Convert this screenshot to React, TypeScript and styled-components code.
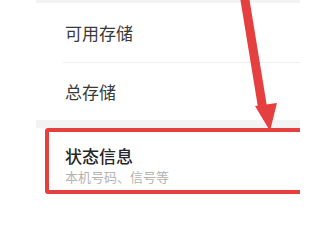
import React from "react";
import styled, { createGlobalStyle } from "styled-components";

const Global = createGlobalStyle`
  html, body { margin: 0; padding: 0; background: #ffffff; }
  body { font-family: "Noto Sans CJK SC", "Noto Sans", sans-serif; }
`;

const Screen = styled.div`
  position: relative;
  width: 300px;
  height: 200px;
  overflow: hidden;
  background: #ffffff;
`;

const Column = styled.div`
  margin-left: 36px;
  display: flex;
  flex-direction: column;
`;

const Gap = styled.div<{ $h: number }>`
  height: ${(p) => p.$h}px;
  background: #f3f3f3;
`;

const Card = styled.div`
  background: #ffffff;
  display: flex;
  flex-direction: column;
`;

const Row = styled.div<{ $h: number; $divider?: boolean }>`
  position: relative;
  height: ${(p) => p.$h}px;
  display: flex;
  flex-direction: column;
  justify-content: center;
  padding-left: 29px;
  box-sizing: border-box;
  &::after {
    content: "";
    display: ${(p) => (p.$divider ? "block" : "none")};
    position: absolute;
    left: 27px;
    right: 0;
    bottom: 0;
    height: 1px;
    background: #efefef;
  }
`;

const Title = styled.div<{ $strong?: boolean }>`
  font-size: 17px;
  line-height: 22px;
  color: ${(p) => (p.$strong ? "#262626" : "#3a3a3a")};
  font-weight: ${(p) => (p.$strong ? 500 : 400)};
  white-space: nowrap;
`;

const Sub = styled.div`
  font-size: 13px;
  line-height: 18px;
  color: #b3b3b3;
  margin-top: 1px;
  white-space: nowrap;
`;

const Highlight = styled.div`
  position: absolute;
  left: 9px;
  top: 0;
  right: -10px;
  height: 66px;
  border: 4px solid #e5403f;
  border-radius: 3px;
  box-sizing: border-box;
  pointer-events: none;
`;

const ArrowLayer = styled.svg`
  position: absolute;
  left: 0;
  top: 0;
  width: 300px;
  height: 200px;
  pointer-events: none;
`;

export default function App() {
  return (
    <>
      <Global />
      <Screen>
        <Column>
          <Gap $h={3} />
          <Card>
            <Row $h={60} $divider>
              <Title>可用存储</Title>
            </Row>
            <Row $h={57}>
              <Title>总存储</Title>
            </Row>
          </Card>
          <Gap $h={8} />
          <Card>
            <Row $h={72} style={{ justifyContent: "flex-start", paddingTop: 17 }}>
              <Title $strong>状态信息</Title>
              <Sub>本机号码、信号等</Sub>
              <Highlight />
            </Row>
          </Card>
        </Column>
        <ArrowLayer viewBox="0 0 300 200">
          <line x1="244" y1="-6" x2="263" y2="110" stroke="#e5403f" strokeWidth="9" />
          <polygon points="255,106 277,103 270,131" fill="#e5403f" />
        </ArrowLayer>
      </Screen>
    </>
  );
}
